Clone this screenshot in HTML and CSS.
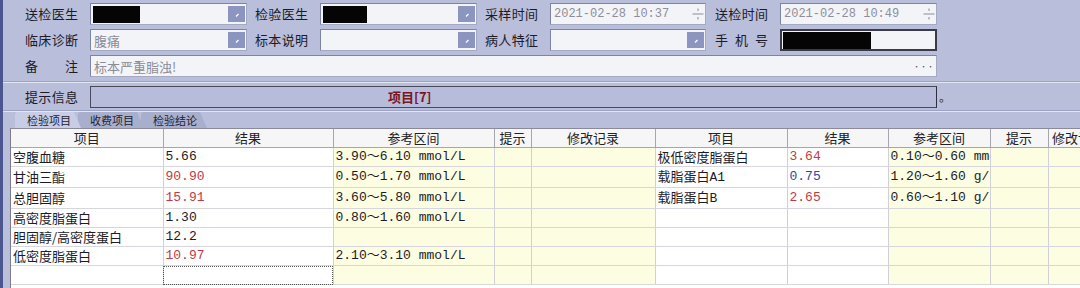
FILE: index.html
```html
<!DOCTYPE html>
<html>
<head>
  <title>检验结果录入</title>
  <link rel="stylesheet" href="styles.css">
</head>
<body>
  <div class="window">
    <div class="form">
      <div class="lbl"><span>送检医生</span></div>
      <div class="field combo"><span class="redact r1"></span><span class="drop"><svg width="17" height="16"><path d="M8 10.5 L10.5 8" stroke="#fff" stroke-width="1.2"/></svg></span></div>
      <div class="lbl"><span>检验医生</span></div>
      <div class="field combo"><span class="redact r2"></span><span class="drop"><svg width="17" height="16"><path d="M8 10.5 L10.5 8" stroke="#fff" stroke-width="1.2"/></svg></span></div>
      <div class="lbl"><span>采样时间</span></div>
      <div class="field date"><span class="mono">2021-02-28 10:37</span><span class="spin"><svg width="12" height="18"><path d="M6 3.5 V6 M0.5 9 H11.5 M6 12 V14.5" stroke="#8a8a96" stroke-width="1"/></svg></span></div>
      <div class="lbl"><span>送检时间</span></div>
      <div class="field date"><span class="mono">2021-02-28 10:49</span><span class="spin"><svg width="12" height="18"><path d="M6 3.5 V6 M0.5 9 H11.5 M6 12 V14.5" stroke="#8a8a96" stroke-width="1"/></svg></span></div>

      <div class="lbl"><span>临床诊断</span></div>
      <div class="field combo"><span class="hint">腹痛</span><span class="drop"><svg width="17" height="16"><path d="M8 10.5 L10.5 8" stroke="#fff" stroke-width="1.2"/></svg></span></div>
      <div class="lbl"><span>标本说明</span></div>
      <div class="field combo"><span class="drop"><svg width="17" height="16"><path d="M8 10.5 L10.5 8" stroke="#fff" stroke-width="1.2"/></svg></span></div>
      <div class="lbl"><span>病人特征</span></div>
      <div class="field combo"><span class="drop"><svg width="17" height="16"><path d="M8 10.5 L10.5 8" stroke="#fff" stroke-width="1.2"/></svg></span></div>
      <div class="lbl"><span>手机号</span></div>
      <div class="field focus"><span class="redact r3"></span></div>

      <div class="lbl"><span>备注</span></div>
      <div class="field memo"><span class="hint">标本严重脂浊!</span><span class="dots">•••</span></div>
    </div>

    <div class="sep"></div>

    <div class="tip-row">
      <div class="lbl"><span>提示信息</span></div>
      <div class="tip-box">项目[7]</div>
      <span class="tip-tail">。</span>
    </div>

    <div class="sep sep-b"></div>

    <div class="tabs">
      <div class="tab active">检验项目</div>
      <div class="tab">收费项目</div>
      <div class="tab">检验结论</div>
    </div>

    <div class="grid-wrap">
      <table class="grid">
        <colgroup>
          <col class="c1"><col class="c2"><col class="c3"><col class="c4"><col class="c5">
          <col class="c6"><col class="c7"><col class="c8"><col class="c9"><col class="c10">
        </colgroup>
        <tr>
          <th>项目</th><th>结果</th><th>参考区间</th><th>提示</th><th>修改记录</th>
          <th>项目</th><th>结果</th><th>参考区间</th><th>提示</th><th>修改记录</th>
        </tr>
        <tr>
          <td>空腹血糖</td><td class="num">5.66</td><td class="y num">3.90～6.10 mmol/L</td><td class="y"></td><td class="y"></td>
          <td>极低密度脂蛋白</td><td class="num hi">3.64</td><td class="y num">0.10～0.60 mmol/L</td><td class="y"></td><td class="y"></td>
        </tr>
        <tr>
          <td>甘油三酯</td><td class="num hi">90.90</td><td class="y num">0.50～1.70 mmol/L</td><td class="y"></td><td class="y"></td>
          <td>载脂蛋白<span class="mono">A1</span></td><td class="num lo">0.75</td><td class="y num">1.20～1.60 g/L</td><td class="y"></td><td class="y"></td>
        </tr>
        <tr>
          <td>总胆固醇</td><td class="num hi">15.91</td><td class="y num">3.60～5.80 mmol/L</td><td class="y"></td><td class="y"></td>
          <td>载脂蛋白<span class="mono">B</span></td><td class="num hi">2.65</td><td class="y num">0.60～1.10 g/L</td><td class="y"></td><td class="y"></td>
        </tr>
        <tr>
          <td>高密度脂蛋白</td><td class="num">1.30</td><td class="y num">0.80～1.60 mmol/L</td><td class="y"></td><td class="y"></td>
          <td></td><td></td><td class="y"></td><td class="y"></td><td class="y"></td>
        </tr>
        <tr>
          <td>胆固醇/高密度蛋白</td><td class="num">12.2</td><td class="y"></td><td class="y"></td><td class="y"></td>
          <td></td><td></td><td class="y"></td><td class="y"></td><td class="y"></td>
        </tr>
        <tr>
          <td>低密度脂蛋白</td><td class="num hi">10.97</td><td class="y num">2.10～3.10 mmol/L</td><td class="y"></td><td class="y"></td>
          <td></td><td></td><td class="y"></td><td class="y"></td><td class="y"></td>
        </tr>
        <tr>
          <td></td><td class="edit"></td><td class="y"></td><td class="y"></td><td class="y"></td>
          <td></td><td></td><td class="y"></td><td class="y"></td><td class="y"></td>
        </tr>
      </table>
    </div>
  </div>
</body>
</html>
```

FILE: styles.css
```css
body { margin: 0; width: 1080px; height: 288px; overflow: hidden; background: #b9bedb; font-family: "Noto Sans CJK SC", sans-serif; font-size: 13px; color: #1c1c28; }
.window { border-left: 3px solid #4b5590; height: 288px; box-sizing: border-box; display: flex; flex-direction: column; }

.form { display: grid; grid-template-columns: 87px 157px 73px 157px 73px 156px 74px 157px; grid-auto-rows: 22px; row-gap: 4px; padding-top: 3px; }
.lbl { display: flex; align-items: center; justify-content: flex-end; padding-right: 12px; line-height: 22px; }
.lbl span { display: inline-block; width: 53px; text-align: justify; text-align-last: justify; }

.field { display: flex; align-items: center; background: #f3f4f8; border: 1px solid #a4aac4; border-top-color: #7d83a2; border-left-color: #7d83a2; box-sizing: border-box; padding-left: 2px; overflow: hidden; }
.memo { grid-column: span 7; }
.focus { border: 2px solid #3a3a48; padding-left: 1px; }
.hint { color: #8c8c96; padding-left: 1px; }
.mono { font-family: "Liberation Mono", "Noto Sans CJK SC", monospace; }
.date .mono { font-size: 12px; color: #8e8e98; padding-left: 1px; }
.redact { display: block; height: 17px; background: #050505; }
.r1 { width: 47px; }
.r2 { width: 44px; }
.r3 { width: 88px; }
.drop { display: block; width: 17px; height: 16px; margin: 0 1px 0 auto; background: #8c95c0; }
.drop svg, .spin svg { display: block; }
.spin { margin: 0 1px 0 auto; }
.dots { margin-left: auto; color: #4a4a58; font-size: 7px; letter-spacing: 0; padding-right: 2px; }

.sep { height: 0; margin-top: 4px; border-top: 1px solid #9da3c2; border-bottom: 1px solid #e2e5f2; }
.sep-b { margin-top: 2px; }

.tip-row { display: flex; height: 22px; margin-top: 3px; }
.tip-row .lbl { width: 87px; box-sizing: border-box; }
.tip-box { width: 847px; box-sizing: border-box; border: 1px solid #4a4a5c; border-right-color: #2e2e3e; background: #b7bcda; color: #7c1422; font-weight: bold; line-height: 20px; padding-left: 297px; }
.tip-tail { line-height: 22px; padding-left: 2px; font-size: 12px; color: #333; }

.tabs { display: flex; height: 16px; padding-left: 12px; }
.tab { position: relative; height: 16px; padding: 0 10px 0 12px; margin-right: -3px; font-size: 11px; line-height: 17px; color: #223; background: #a8afcd; border-radius: 3px 0 0 0; clip-path: polygon(0 0, calc(100% - 7px) 0, 100% 100%, 0 100%); }
.tab.active { background: #c8cce4; z-index: 1; }

.grid-wrap { flex: 1; margin-left: 7px; background: #fff; border-left: 1px solid #7c7c8c; border-top: 1px solid #8a8a98; overflow: hidden; }
.grid { border-collapse: collapse; table-layout: fixed; width: 1097px; }
.c1 { width: 152px; } .c2 { width: 170px; } .c3 { width: 161px; } .c4 { width: 37px; } .c5 { width: 124px; }
.c6 { width: 132px; } .c7 { width: 101px; } .c8 { width: 102px; } .c9 { width: 58px; } .c10 { width: 60px; }
.grid th, .grid td { height: 18px; padding: 0 2px; line-height: 18px; white-space: nowrap; overflow: hidden; text-overflow: clip; }
.grid th { font-weight: normal; background: #f6f6f6; border-right: 1px solid #a6a6ae; border-bottom: 1px solid #a6a6ae; text-align: center; color: #222; }
.grid td { border-right: 1px solid #d0d0d6; border-bottom: 1px solid #d6d6dc; text-align: left; }
.grid td.y { background: #fdfde2; }
.grid td.num { font-family: "Liberation Mono", "Noto Sans CJK SC", monospace; font-size: 13px; }
.grid td.hi { color: #c23a48; }
.grid td.lo { color: #3545a0; }
.grid td.edit { outline: 1px dotted #555; outline-offset: -1px; }
```
